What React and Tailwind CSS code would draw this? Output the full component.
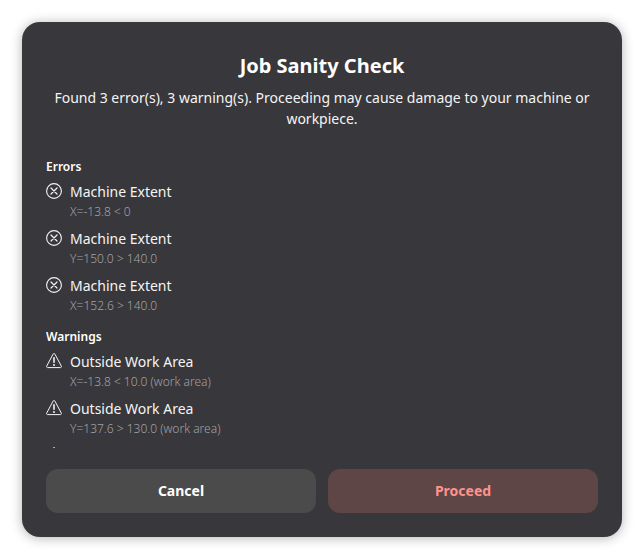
import { useState } from "react";

const errors = [
  { title: "Machine Extent", detail: "X=-13.8 < 0" },
  { title: "Machine Extent", detail: "Y=150.0 > 140.0" },
  { title: "Machine Extent", detail: "X=152.6 > 140.0" },
];

const warnings = [
  { title: "Outside Work Area", detail: "X=-13.8 < 10.0 (work area)" },
  { title: "Outside Work Area", detail: "Y=137.6 > 130.0 (work area)" },
  { title: "Outside Work Area", detail: "X=152.6 > 130.0 (work area)" },
];

const ErrorIcon = () => (
  <svg
    className="mt-0.5 size-4 shrink-0"
    viewBox="0 0 16 16"
    fill="none"
    stroke="currentColor"
    aria-hidden="true"
  >
    <circle cx="8" cy="8" r="7.4" strokeWidth="1.1" />
    <path d="M5 5l6 6M11 5l-6 6" strokeWidth="1.2" strokeLinecap="round" />
  </svg>
);

const WarningIcon = () => (
  <svg
    className="mt-0.5 size-4 shrink-0"
    viewBox="0 0 16 16"
    fill="none"
    stroke="currentColor"
    aria-hidden="true"
  >
    <path
      d="M7.1 1.1c.4-.8 1.4-.8 1.8 0l6.4 12c.4.8-.1 1.5-.9 1.5H1.6c-.8 0-1.3-.7-.9-1.5z"
      strokeWidth="1"
      strokeLinejoin="round"
    />
    <path d="M8 4.8v4.4" strokeWidth="1.6" strokeLinecap="round" />
    <circle cx="8" cy="12" r="1" fill="currentColor" stroke="none" />
  </svg>
);

const IssueSection = ({ heading, issues, icon: Icon }) => (
  <section>
    <h2 className="text-[12px] leading-5 font-semibold text-white">
      {heading}
    </h2>
    <ul className="mt-1 flex flex-col gap-2">
      {issues.map((issue) => (
        <li key={issue.detail} className="flex gap-2">
          <Icon />
          <div>
            <p className="text-[14px] leading-[22px]">{issue.title}</p>
            <p className="text-[12px] leading-[17px] font-light text-[#a2a2a5]">
              {issue.detail}
            </p>
          </div>
        </li>
      ))}
    </ul>
  </section>
);

const App = () => {
  const [open, setOpen] = useState(true);

  if (!open) return null;

  return (
    <div className="min-h-screen bg-white p-[22px] font-['Noto_Sans',sans-serif] text-[#f4f4f5]">
      <div
        role="dialog"
        aria-labelledby="dialog-title"
        aria-describedby="dialog-body"
        className="rounded-[18px] bg-[#38373b] px-6 pt-[31px] pb-6 shadow-[0_1px_12px_rgba(0,0,0,0.3)]"
      >
        <h1
          id="dialog-title"
          className="text-center text-[20px] leading-[26px] font-bold text-white"
        >
          Job Sanity Check
        </h1>
        <p
          id="dialog-body"
          className="mt-2 text-center text-[14px] leading-[21px]"
        >
          Found 3 error(s), 3 warning(s). Proceeding may cause damage to your
          machine or workpiece.
        </p>

        <div className="mt-7 flex h-[291px] flex-col gap-[13px] overflow-y-auto [scrollbar-width:none]">
          <IssueSection heading="Errors" issues={errors} icon={ErrorIcon} />
          <IssueSection
            heading="Warnings"
            issues={warnings}
            icon={WarningIcon}
          />
        </div>

        <div className="mt-[21px] grid grid-cols-2 gap-3 text-[14px] leading-5 font-bold">
          <button
            type="button"
            onClick={() => setOpen(false)}
            className="h-11 rounded-xl bg-[#4b4b4c] text-white hover:bg-[#565659]"
          >
            Cancel
          </button>
          <button
            type="button"
            onClick={() => setOpen(false)}
            className="h-11 rounded-xl bg-[#5e4546] text-[#ff938c] hover:bg-[#6a4b4c]"
          >
            Proceed
          </button>
        </div>
      </div>
    </div>
  );
};

export default App;
